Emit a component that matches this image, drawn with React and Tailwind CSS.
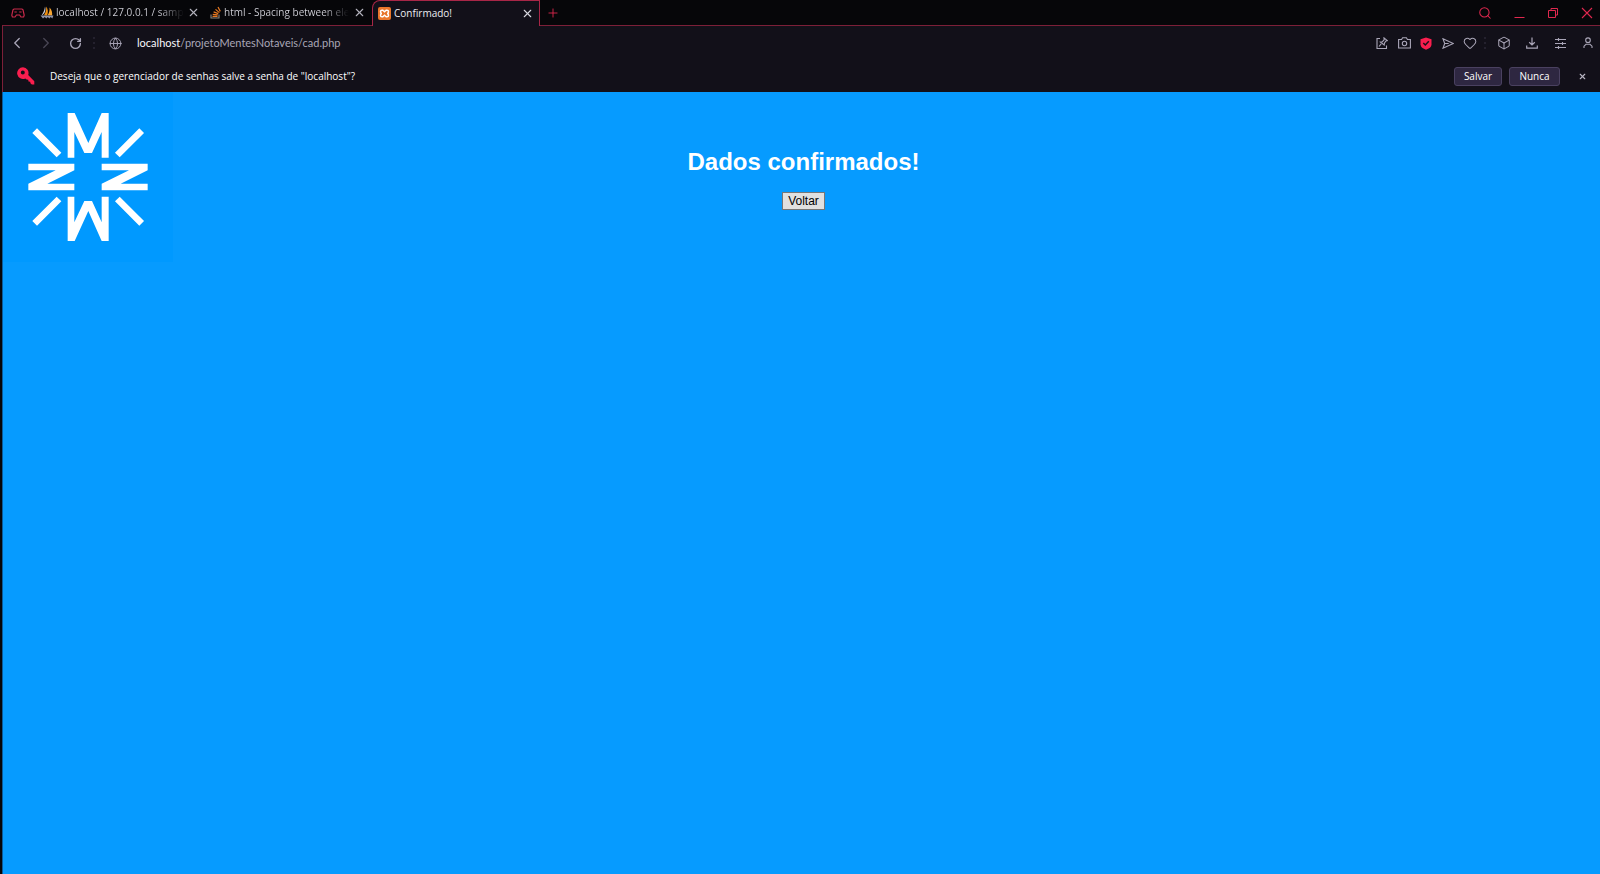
import { Search, X, Heart, Box, Globe, ChevronLeft, ChevronRight, RotateCw, Plus } from 'lucide-react';

const iconButton = 'flex shrink-0 items-center justify-center';

function Gamepad() {
  return (
    <svg width="14" height="10" viewBox="0 0 14 10" fill="none" stroke="#c92a4b" strokeWidth="1.2">
      <path d="M3 1h8l1 .8 1.2 5.4L12.600 9H10L8.600 7H5.400L4 9H1.400L.8 7.200 2 1.800z" />
      <path d="M3.400 4h2.400M8.200 4h2.400" />
    </svg>
  );
}

function MyAdminIcon() {
  return (
    <svg width="14" height="13" viewBox="0 0 14 13">
      <path d="M5 .5C6 4 5.500 7.500 1.500 9.500 3.500 6.500 4.500 4 5 .5z" fill="#c9cbd6" />
      <path d="M6 .5c2.200 2.500 2.400 6 1 9L4 9.200C6 6.500 6.500 3.500 6 .5z" fill="#f29111" />
      <path d="M9.500 1.500c2.300 2.200 3 5.200 2.600 8L7.500 9.300c1.800-2.300 2.400-5 2-7.800z" fill="#f7a531" />
      <path d="M.5 9.500h13l-1.200 3-1.500-1.600-1.500 1.600-1.500-1.600-1.500 1.600-1.500-1.600L3 12.500z" fill="#8f93a8" />
    </svg>
  );
}

function StackIcon() {
  return (
    <svg width="14" height="13" viewBox="-2 0 14 13" fill="none">
      <path d="M1 8.500V12h8V8.500" stroke="#8d8780" strokeWidth="1.100" />
      <path d="M2.500 10.300h5M2.700 8.300l5 .6M3.600 5.900l4.700 1.700M5.500 3.400l3.900 3.200M8 1l2.300 4.400" stroke="#e87922" strokeWidth="1.200" />
    </svg>
  );
}

function XamppIcon() {
  return (
    <svg width="13" height="13" viewBox="0 0 13 13">
      <rect width="13" height="13" rx="2" fill="#e9762b" />
      <path d="M4 3.200h.8L6.500 4.700l1.700-1.500H9c1 0 1.500.7 1.500 1.600S9.700 6.500 9 6.500c.7 0 1.500.8 1.500 1.700S10 9.800 9 9.800h-.8L6.500 8.300 4.800 9.800H4c-1 0-1.500-.7-1.500-1.600S3.300 6.500 4 6.500c-.7 0-1.500-.8-1.500-1.700S3 3.200 4 3.200z" fill="none" stroke="#fff" strokeWidth="1.500" />
    </svg>
  );
}

function Tab({ icon, title }) {
  return (
    <div className="flex h-full min-w-0 flex-1 items-center gap-0.5 border-b border-[#7c1f38] pl-1">
      <span className="shrink-0">{icon}</span>
      <span className="whitespace-nowrap bg-linear-to-r from-[#d4d4dc] from-80% to-transparent bg-clip-text text-transparent">
        {title}
      </span>
      <button aria-label="Fechar guia" className={`${iconButton} mr-1.5 ml-auto w-4 text-[#b4b3bd]`}>
        <X size={13} strokeWidth={2} />
      </button>
    </div>
  );
}

function TabBar() {
  return (
    <div className="flex h-[26px] bg-[#060609] text-[10px]">
      <div className="flex w-[34px] items-center justify-center border-b border-[#7c1f38] pr-0.5">
        <Gamepad />
      </div>
      <div className="flex w-[336px]">
        <Tab icon={<MyAdminIcon />} title="localhost / 127.0.0.1 / samp" />
        <Tab icon={<StackIcon />} title="html - Spacing between ele" />
      </div>
      <div className="flex w-[168px] items-center gap-[3px] rounded-tl-lg border-l border-r border-t border-[#a82647] bg-[#121019] pl-[5px] text-[#ececf2]">
        <XamppIcon />
        <span className="flex-1">Confirmado!</span>
        <button aria-label="Fechar guia" className={`${iconButton} mr-1 w-4 text-[#d9d8e0]`}>
          <X size={13} strokeWidth={2} />
        </button>
      </div>
      <div className="flex flex-1 items-center justify-between border-b border-[#7c1f38] pl-1.5 text-[#e0284f]">
        <button aria-label="Nova guia" className={iconButton}><Plus size={14} strokeWidth={1.5} /></button>
        <div className="-mr-1 flex items-center">
          <button aria-label="Pesquisar" className={`${iconButton} w-[34px]`}><Search size={14} strokeWidth={1.75} /></button>
          <button aria-label="Minimizar" className={`${iconButton} w-[34px]`}>
            <svg width="11" height="12" viewBox="0 0 11 12"><path d="M.5 10.500h10" stroke="currentColor" /></svg>
          </button>
          <button aria-label="Restaurar" className={`${iconButton} w-[34px]`}>
            <svg width="12" height="12" viewBox="0 0 12 12" fill="none" stroke="currentColor"><path d="M1.500 3.500h7v7h-7zM4 3.500v-2h6.500V8h-2" /></svg>
          </button>
          <button aria-label="Fechar" className={`${iconButton} w-[34px]`}>
            <svg width="12" height="12" viewBox="0 0 12 12"><path d="M1 1l10 10M11 1L1 11" stroke="currentColor" strokeWidth="1.100" /></svg>
          </button>
        </div>
      </div>
    </div>
  );
}

function Dots() {
  return (
    <svg width="2" height="12" viewBox="0 0 2 12" className="shrink-0" fill="#24212e"><path d="M0 0h2v2H0zM0 5h2v2H0zM0 10h2v2H0z" /></svg>
  );
}

function AddressBar() {
  return (
    <div className="flex h-[34px] items-center text-[#aaa6b8]">
      <button aria-label="Voltar página" className={`${iconButton} w-7`}><ChevronLeft size={18} strokeWidth={1.75} /></button>
      <button aria-label="Avançar página" className={`${iconButton} w-[30px] text-[#4a4756]`}><ChevronRight size={18} strokeWidth={1.75} /></button>
      <button aria-label="Recarregar" className={`${iconButton} w-7`}><RotateCw size={13} strokeWidth={2.5} /></button>
      <span className="ml-1"><Dots /></span>
      <Globe size={13} strokeWidth={1.75} className="ml-3.5 shrink-0" />
      <a href="/projetoMentesNotaveis/cad.php" className="ml-[15px] flex-1 font-[Lato,'Open_Sans',sans-serif] text-[11px] text-[#a9a6b6]">
        <span className="text-[#f8f8fc]">localhost</span>/projetoMentesNotaveis/cad.php
      </a>
      <div className="-mr-0.5 flex items-center">
        <button aria-label="Fixar" className={`${iconButton} w-[22px]`}>
          <svg width="12" height="12" viewBox="0 0 12 12" fill="none" stroke="currentColor" strokeWidth="1.100">
            <path d="M4 1.500H1v10h9.500V8.500M3 9.500l2.200-2.600M8 .8l3.200 2.800-1.200.4-1.500 2-.3 2L4.400 5l2-.3 1.700-1.800z" />
          </svg>
        </button>
        <button aria-label="Captura" className={`${iconButton} w-[22px]`}>
          <svg width="13" height="12" viewBox="0 0 13 12" fill="none" stroke="currentColor" strokeWidth="1.100">
            <path d="M.6 2.500h3l1-1.700h3.800l1 1.700h3v8.500H.6z" /><circle cx="6.500" cy="6.500" r="2.200" />
          </svg>
        </button>
        <button aria-label="Proteção" className={`${iconButton} w-[22px]`}>
          <svg width="12" height="13" viewBox="0 0 12 13"><path d="M6 .5l5.500 1.700v5C11.500 10 9 11.700 6 12.700 3 11.700.5 10 .5 7.200v-5z" fill="#fa1e4e" /><path d="M3.300 6l2 2 3.500-3.700" fill="none" stroke="#1c1019" strokeWidth="1.500" /></svg>
        </button>
        <button aria-label="Enviar" className={`${iconButton} w-[22px]`}>
          <svg width="12" height="11" viewBox="0 0 12 11" fill="none" stroke="currentColor" strokeWidth="1.100"><path d="M1 .8l10.300 4.700L1 10.200l1.700-4.700zM2.700 5.500h4" /></svg>
        </button>
        <button aria-label="Favoritar" className={`${iconButton} w-[22px]`}><Heart size={14} strokeWidth={1.75} /></button>
        <span className="ml-[3px]"><Dots /></span>
        <button aria-label="Extensões" className={`${iconButton} ml-1 w-7`}><Box size={14} strokeWidth={1.75} /></button>
        <button aria-label="Downloads" className={`${iconButton} w-7`}>
          <svg width="12" height="12" viewBox="0 0 12 12" fill="none" stroke="currentColor" strokeWidth="1.200"><path d="M6 .5V8M3.200 5.300L6 8l2.800-2.700M.7 8.500v2.700h10.600V8.500" /></svg>
        </button>
        <button aria-label="Configuração" className={`${iconButton} w-7`}>
          <svg width="11" height="11" viewBox="0 0 11 11" fill="none" stroke="currentColor" strokeWidth="1.100"><path d="M0 1.500h11M0 5.500h11M0 9.500h11M3.500 0v3M7.500 4v3M3.500 8v3" /></svg>
        </button>
        <button aria-label="Perfil" className={`${iconButton} w-7`}>
          <svg width="10" height="12" viewBox="0 0 10 12" fill="none" stroke="currentColor" strokeWidth="1.100"><circle cx="5" cy="3.200" r="2.300" /><path d="M1 11V9.200L3 7.300h4l2 1.900V11" /></svg>
        </button>
      </div>
    </div>
  );
}

function PasswordBar() {
  const button = 'flex h-[19px] items-center justify-center rounded-[3px] border border-[#4a4160] bg-[#2e2741] text-[10px] font-medium text-white';
  return (
    <div className="flex h-8 items-center pr-3 text-[10px] text-white">
      <svg width="18" height="18" viewBox="0 0 18 18" className="ml-3.5 shrink-0">
        <path fillRule="evenodd" d="M6 .3A5.800 5.800 0 1 0 8.300 11.400l1.300 1.200 1.600.2.300 1.600 1.600.3.500 1.700 1.300 1.200h2.400v-3.400L11.200 8A5.800 5.800 0 0 0 6 .3zM5.800 3.500a2 2 0 1 1 0 4 2 2 0 0 1 0-4z" fill="#fa1e4e" />
      </svg>
      <p className="ml-[15px] flex-1">Deseja que o gerenciador de senhas salve a senha de "localhost"?</p>
      <button className={`${button} w-12`}>Salvar</button>
      <button className={`${button} ml-[7px] w-[51px]`}>Nunca</button>
      <button aria-label="Dispensar" className={`${iconButton} ml-4 w-3 text-[#b9b7c3]`}><X size={9} strokeWidth={3} /></button>
    </div>
  );
}

function Logo() {
  return (
    <svg role="img" aria-label="Mentes Notáveis" width="170" height="170" viewBox="9 6 510 510" className="bg-[#0099ff]">
      <g fill="#fff">
        <path d="M203 69h21l41 90 40-90h21v134h-21v-77l-29 63h-23l-30-63v77h-20z" />
        <path d="M203 453h21l41-90 40 90h21V320h-21v77l-29-64h-23l-30 64v-77h-20z" />
        <path d="M85 221h138v20l-81 40h81v20H85v-20l82-40H85z" />
        <path d="M305 221h138v20l-81 40h81v20H305v-20l82-40h-82z" />
      </g>
      <path d="M104 122l73 73M425 122l-73 73M104 400l73-73M425 400l-73-73" stroke="#fff" strokeWidth="20" />
    </svg>
  );
}

export default function App() {
  return (
    <div className="flex min-h-screen flex-col bg-[#060609] pl-0.5 font-['Open_Sans','Noto_Sans',sans-serif]">
      <TabBar />
      <div className="border-l border-[#7c1f38] bg-[#121019]">
        <AddressBar />
        <PasswordBar />
      </div>
      <main className="grid flex-1 grid-cols-[1fr_auto_1fr] items-start border-l border-[#0b5b9a] bg-[#069bff] font-['Liberation_Sans',Arial,sans-serif]">
        <Logo />
        <div className="flex flex-col items-center pt-14 pl-1">
          <h1 className="text-2xl leading-7 font-bold text-white">Dados confirmados!</h1>
          <button className="mt-4 border border-[#767676] bg-[#e0e0e0] px-[5px] text-xs leading-4 text-black">Voltar</button>
        </div>
      </main>
    </div>
  );
}
